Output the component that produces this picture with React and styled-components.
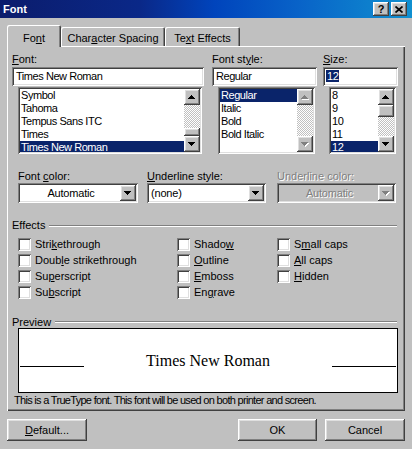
import styled, { createGlobalStyle, css } from "styled-components";

const GlobalStyle = createGlobalStyle`
  html, body {
    margin: 0;
    background: #c0c0c0;
  }
  body {
    font-family: "Liberation Sans", Arial, sans-serif;
    font-size: 11px;
    color: #000;
  }
`;

const raised = css`
  box-shadow: inset -1px -1px #404040, inset 1px 1px #fff,
    inset -2px -2px #808080, inset 2px 2px #dfdfdf;
`;

const sunken = css`
  box-shadow: inset 1px 1px #808080, inset -1px -1px #fff,
    inset 2px 2px #404040, inset -2px -2px #dfdfdf;
`;

const Window = styled.div`
  width: 412px;
  height: 449px;
  overflow: hidden;
  background: #c0c0c0;
  display: flex;
  flex-direction: column;
`;

const TitleBar = styled.div`
  height: 18px;
  flex: none;
  display: flex;
  align-items: center;
  padding: 0 5px 0 3px;
  background: linear-gradient(
    90deg,
    #0b1c6c 0%,
    #0a2888 34%,
    #0044bc 52%,
    #0862c8 72%,
    #1090d0 100%
  );
`;

const TitleText = styled.span`
  color: #fff;
  font-weight: bold;
  font-size: 11px;
`;

const CaptionButtons = styled.div`
  margin-left: auto;
  display: flex;
  gap: 2px;
`;

const CaptionButton = styled.div`
  width: 16px;
  height: 14px;
  background: #c0c0c0;
  ${raised};
  display: flex;
  align-items: center;
  justify-content: center;
  font-weight: bold;
  font-size: 11px;
  line-height: 14px;
`;

const Body = styled.div`
  padding: 7px 7px 0;
  display: flex;
  flex-direction: column;
`;

const TabStrip = styled.div`
  height: 21px;
  display: flex;
  align-items: flex-end;
`;

const Tab = styled.div`
  width: ${(p) => p.$w}px;
  height: ${(p) => (p.$active ? 22 : 19)}px;
  margin-bottom: ${(p) => (p.$active ? -1 : 0)}px;
  padding-top: ${(p) => (p.$active ? 7 : 5)}px;
  box-sizing: border-box;
  position: relative;
  z-index: ${(p) => (p.$active ? 1 : 0)};
  background: #c0c0c0;
  border-radius: 2px 2px 0 0;
  box-shadow: inset 1px 1px #fff, inset -1px 0 #404040, inset -2px 0 #808080;
  text-align: center;
  line-height: 13px;
`;

const Panel = styled.div`
  height: 365px;
  box-sizing: border-box;
  padding: 7px 6px 0 5px;
  box-shadow: inset 1px 1px #fff, inset -1px -1px #404040,
    inset -2px -2px #808080;
  display: flex;
  flex-direction: column;
`;

const Label = styled.div`
  line-height: 13px;
  height: 13px;
  white-space: nowrap;
  color: ${(p) => (p.$disabled ? "#808080" : "#000")};
  text-shadow: ${(p) => (p.$disabled ? "1px 1px #fff" : "none")};
`;

const Key = styled.u`
  text-decoration-thickness: 1px;
  text-underline-offset: 1px;
`;

const FontRow = styled.div`
  display: flex;
`;

const Column = styled.div`
  width: ${(p) => p.$w}px;
  margin-right: ${(p) => p.$gap || 0}px;
  display: flex;
  flex-direction: column;
`;

const TextBox = styled.div`
  height: 19px;
  margin-top: 1px;
  box-sizing: border-box;
  padding: 2px 4px;
  background: #fff;
  ${sunken};
  line-height: 15px;
  letter-spacing: -0.45px;
  white-space: nowrap;
`;

const Highlight = styled.span`
  background: #0a246a;
  color: #fff;
  padding: 0 1px;
  margin-left: -1px;
`;

const ListBox = styled.div`
  height: 67px;
  margin: 1px 2px 0 6px;
  box-sizing: border-box;
  padding: 2px;
  background: #fff;
  ${sunken};
  display: flex;
`;

const Items = styled.div`
  flex: 1;
  overflow: hidden;
`;

const Item = styled.div`
  height: 13px;
  line-height: 13px;
  padding-left: 1px;
  letter-spacing: -0.45px;
  white-space: nowrap;
  background: ${(p) => (p.$selected ? "#0a246a" : "transparent")};
  color: ${(p) => (p.$selected ? "#fff" : "#000")};
`;

const ScrollBar = styled.div`
  width: 16px;
  display: flex;
  flex-direction: column;
`;

const ArrowButton = styled.div`
  width: 16px;
  height: 16px;
  flex: none;
  background: #c0c0c0;
  ${raised};
  display: flex;
  align-items: center;
  justify-content: center;
`;

const Track = styled.div`
  flex: 1;
  display: flex;
  flex-direction: column;
  justify-content: ${(p) => (p.$thumb === "bottom" ? "flex-end" : "flex-start")};
  background-color: #c0c0c0;
  background-image: conic-gradient(
    #fff 25%,
    transparent 0 50%,
    #fff 0 75%,
    transparent 0
  );
  background-size: 2px 2px;
`;

const Thumb = styled.div`
  height: ${(p) => p.$h}px;
  background: #c0c0c0;
  ${raised};
`;

const ColorRow = styled.div`
  margin-top: 16px;
  padding-left: 6px;
  display: flex;
`;

const ComboBox = styled.div`
  height: 20px;
  box-sizing: border-box;
  padding: 2px;
  background: ${(p) => (p.$disabled ? "#c0c0c0" : "#fff")};
  ${sunken};
  display: flex;
`;

const ComboText = styled.div`
  flex: 1;
  line-height: 16px;
  padding-left: 2px;
  letter-spacing: -0.2px;
  text-align: ${(p) => (p.$center ? "center" : "left")};
  color: ${(p) => (p.$disabled ? "#808080" : "#000")};
  text-shadow: ${(p) => (p.$disabled ? "1px 1px #fff" : "none")};
`;

const GroupHeader = styled.div`
  margin-top: ${(p) => p.$top}px;
  height: ${(p) => p.$h}px;
  display: flex;
  align-items: center;
  line-height: 13px;
`;

const GroupLine = styled.div`
  flex: 1;
  margin: 0 2px 0 4px;
  border-top: 1px solid #808080;
  border-bottom: 1px solid #fff;
`;

const Checks = styled.div`
  margin-top: 4px;
  padding-left: 6px;
  display: flex;
`;

const CheckColumn = styled.div`
  width: ${(p) => p.$w}px;
  display: flex;
  flex-direction: column;
`;

const CheckRow = styled.div`
  height: 16px;
  display: flex;
  align-items: center;
  gap: 4px;
  white-space: nowrap;
`;

const CheckBox = styled.div`
  width: 13px;
  height: 13px;
  flex: none;
  background: #fff;
  ${sunken};
`;

const PreviewBox = styled.div`
  height: 65px;
  width: 380px;
  margin-left: 6px;
  box-sizing: border-box;
  border: 1px solid #000;
  background: #fff;
  padding: 0 1px;
  display: flex;
  align-items: center;
`;

const Rule = styled.div`
  width: 64px;
  height: 1px;
  margin-top: 11px;
  background: #000;
`;

const Spacer = styled.div`
  flex: 1;
`;

const Sample = styled.span`
  font-family: "Liberation Serif", "Times New Roman", serif;
  font-size: 16px;
  line-height: 18px;
`;

const Note = styled.div`
  margin-top: 1px;
  padding-left: 2px;
  line-height: 13px;
  letter-spacing: -0.7px;
  white-space: nowrap;
`;

const ButtonRow = styled.div`
  margin-top: 8px;
  display: flex;
  gap: 8px;
`;

const PushButton = styled.div`
  width: ${(p) => p.$w}px;
  height: 22px;
  background: #c0c0c0;
  ${raised};
  display: flex;
  align-items: center;
  justify-content: center;
  margin-right: ${(p) => (p.$push ? "auto" : 0)};
`;

const Arrow = ({ dir = "down", disabled }) => {
  const d =
    dir === "up"
      ? "M3 0h1v1h1v1h1v1h1v1H0V3h1V2h1V1h1z"
      : "M0 0h7v1H6v1H5v1H4v1H3V3H2V2H1V1H0z";
  return (
    <svg width="8" height="5" viewBox="0 0 8 5" shapeRendering="crispEdges">
      {disabled && <path d={d} fill="#fff" transform="translate(1 1)" />}
      <path d={d} fill={disabled ? "#808080" : "#000"} />
    </svg>
  );
};

const CloseGlyph = () => (
  <svg width="8" height="7" viewBox="0 0 8 7">
    <path d="M0.5 0.5L7.5 6.5M7.5 0.5L0.5 6.5" stroke="#000" strokeWidth="1.7" />
  </svg>
);

const Scroller = ({ thumb, thumbH = 8, disabled }) => (
  <ScrollBar>
    <ArrowButton>
      <Arrow dir="up" disabled={disabled} />
    </ArrowButton>
    <Track $thumb={thumb}>{thumb && <Thumb $h={thumbH} />}</Track>
    <ArrowButton>
      <Arrow disabled={disabled} />
    </ArrowButton>
  </ScrollBar>
);

const fonts = ["Symbol", "Tahoma", "Tempus Sans ITC", "Times", "Times New Roman"];
const styles = ["Regular", "Italic", "Bold", "Bold Italic"];
const sizes = ["8", "9", "10", "11", "12"];

const effects = [
  [
    <>Stri<Key>k</Key>ethrough</>,
    <>Doub<Key>l</Key>e strikethrough</>,
    <>Su<Key>p</Key>erscript</>,
    <>Su<Key>b</Key>script</>,
  ],
  [
    <>Shado<Key>w</Key></>,
    <><Key>O</Key>utline</>,
    <><Key>E</Key>mboss</>,
    <>En<Key>g</Key>rave</>,
  ],
  [
    <>S<Key>m</Key>all caps</>,
    <><Key>A</Key>ll caps</>,
    <><Key>H</Key>idden</>,
  ],
];

export default function App() {
  return (
    <Window>
      <GlobalStyle />
      <TitleBar>
        <TitleText>Font</TitleText>
        <CaptionButtons>
          <CaptionButton>?</CaptionButton>
          <CaptionButton>
            <CloseGlyph />
          </CaptionButton>
        </CaptionButtons>
      </TitleBar>

      <Body>
        <TabStrip>
          <Tab $w={54} $active>
            Fo<Key>n</Key>t
          </Tab>
          <Tab $w={104}>
            Char<Key>a</Key>cter Spacing
          </Tab>
          <Tab $w={75}>
            Te<Key>x</Key>t Effects
          </Tab>
        </TabStrip>

        <Panel>
          <FontRow>
            <Column $w={192} $gap={8}>
              <Label>
                <Key>F</Key>ont:
              </Label>
              <TextBox>Times New Roman</TextBox>
              <ListBox>
                <Items>
                  {fonts.map((f) => (
                    <Item key={f} $selected={f === "Times New Roman"}>
                      {f}
                    </Item>
                  ))}
                </Items>
                <Scroller thumb="bottom" />
              </ListBox>
            </Column>
            <Column $w={105} $gap={6}>
              <Label>
                Font st<Key>y</Key>le:
              </Label>
              <TextBox>Regular</TextBox>
              <ListBox>
                <Items>
                  {styles.map((s) => (
                    <Item key={s} $selected={s === "Regular"}>
                      {s}
                    </Item>
                  ))}
                </Items>
                <Scroller disabled />
              </ListBox>
            </Column>
            <Column $w={75}>
              <Label>
                <Key>S</Key>ize:
              </Label>
              <TextBox>
                <Highlight>12</Highlight>
              </TextBox>
              <ListBox>
                <Items>
                  {sizes.map((s) => (
                    <Item key={s} $selected={s === "12"}>
                      {s}
                    </Item>
                  ))}
                </Items>
                <Scroller thumb="top" thumbH={12} />
              </ListBox>
            </Column>
          </FontRow>

          <ColorRow>
            <Column $w={120} $gap={9}>
              <Label>
                Font <Key>c</Key>olor:
              </Label>
              <ComboBox>
                <ComboText $center>Automatic</ComboText>
                <ArrowButton>
                  <Arrow />
                </ArrowButton>
              </ComboBox>
            </Column>
            <Column $w={119} $gap={11}>
              <Label>
                <Key>U</Key>nderline style:
              </Label>
              <ComboBox>
                <ComboText>(none)</ComboText>
                <ArrowButton>
                  <Arrow />
                </ArrowButton>
              </ComboBox>
            </Column>
            <Column $w={119}>
              <Label $disabled>Underline color:</Label>
              <ComboBox $disabled>
                <ComboText $center $disabled>
                  Automatic
                </ComboText>
                <ArrowButton>
                  <Arrow disabled />
                </ArrowButton>
              </ComboBox>
            </Column>
          </ColorRow>

          <GroupHeader $top={16} $h={13}>
            Effects
            <GroupLine />
          </GroupHeader>
          <Checks>
            {effects.map((col, i) => (
              <CheckColumn key={i} $w={[159, 100, 120][i]}>
                {col.map((label, j) => (
                  <CheckRow key={j}>
                    <CheckBox />
                    <span>{label}</span>
                  </CheckRow>
                ))}
              </CheckColumn>
            ))}
          </Checks>

          <GroupHeader $top={16} $h={12}>
            Preview
            <GroupLine />
          </GroupHeader>
          <PreviewBox>
            <Rule />
            <Spacer />
            <Sample>Times New Roman</Sample>
            <Spacer />
            <Rule />
          </PreviewBox>
          <Note>
            This is a TrueType font. This font will be used on both printer and
            screen.
          </Note>
        </Panel>

        <ButtonRow>
          <PushButton $w={80} $push>
            <span>
              <Key>D</Key>efault...
            </span>
          </PushButton>
          <PushButton $w={79}>OK</PushButton>
          <PushButton $w={80}>Cancel</PushButton>
        </ButtonRow>
      </Body>
    </Window>
  );
}
